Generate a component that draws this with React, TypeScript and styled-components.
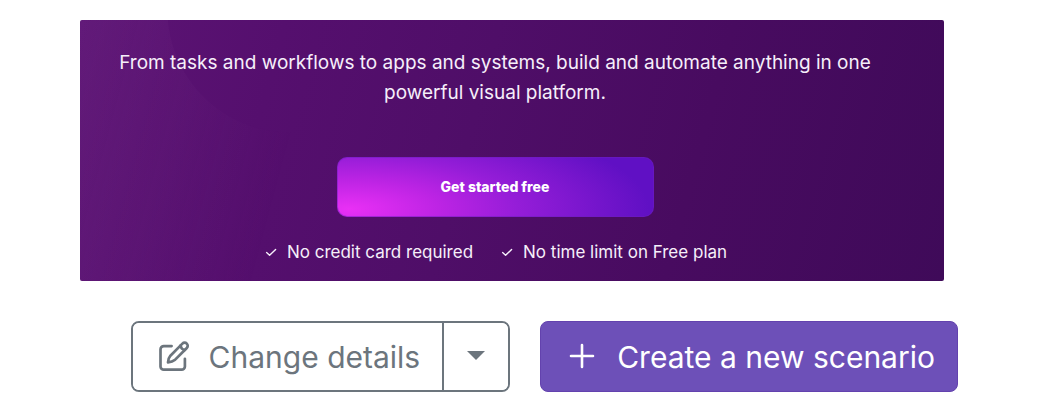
import React from "react";
import styled, { createGlobalStyle } from "styled-components";

const GlobalStyle = createGlobalStyle`
  *, *::before, *::after { box-sizing: border-box; }
  body {
    margin: 0;
    background: #fff;
    font-family: Inter, "Liberation Sans", sans-serif;
  }
`;

const Page = styled.main`
  padding: 20px 88px 28px 80px;
`;

const Banner = styled.section`
  position: relative;
  margin-right: 14px;
  padding: 28px 62px 16px 28px;
  border-radius: 2px;
  overflow: hidden;
  color: #f6effa;
  text-align: center;
  background: linear-gradient(105deg, #5c1474 0%, #550f6e 22%, #4f0e68 45%, #480b60 70%, #3f0a59 100%);

  &::before {
    content: "";
    position: absolute;
    inset: 0;
    background: linear-gradient(105deg, rgba(120, 50, 140, 0.22), rgba(120, 50, 140, 0.1) 14%, rgba(120, 50, 140, 0) 26%);
    mask-image: radial-gradient(circle at 210px -10px, transparent 122px, #000 123px);
  }
`;

const BannerContent = styled.div`
  position: relative;
  display: flex;
  flex-direction: column;
  align-items: center;
`;

const Lead = styled.p`
  margin: 0;
  font-size: 19px;
  line-height: 30px;
`;

const Cta = styled.button`
  width: 317px;
  max-width: 100%;
  height: 60px;
  margin: 49px 0 23px;
  border: 1px solid rgba(110, 30, 190, 0.5);
  border-radius: 10px;
  color: #fff;
  font: 800 14px/20px Inter, "Liberation Sans", sans-serif;
  background: radial-gradient(300px 95px at 12px 52px, #e930f5 0%, #bd24e4 30%, #951dd8 56%, #6010c4 100%) border-box;
`;

const Perks = styled.ul`
  display: flex;
  gap: 28px;
  margin: 0;
  padding: 0 0 1px 2px;
  list-style: none;
`;

const Perk = styled.li`
  display: flex;
  align-items: center;
  gap: 10px;
  font-size: 17px;
  line-height: 24px;
`;

const Actions = styled.div`
  display: flex;
  justify-content: flex-end;
  gap: 30px;
  margin-top: 40px;
`;

const SplitButton = styled.div`
  display: flex;
  height: 71px;
  border: 2px solid #6c757d;
  border-radius: 8px;
  overflow: hidden;
`;

const ActionButton = styled.button<{ $primary?: boolean }>`
  display: flex;
  align-items: center;
  gap: ${(p) => (p.$primary ? 21 : 19)}px;
  height: ${(p) => (p.$primary ? "71px" : "auto")};
  padding: ${(p) => (p.$primary ? "0 22px 0 27px" : "0 22px 0 25px")};
  border: ${(p) => (p.$primary ? "1px solid #6342ae" : "0")};
  border-radius: ${(p) => (p.$primary ? 8 : 0)}px;
  background: ${(p) => (p.$primary ? "#6d50b8" : "#fff")};
  color: ${(p) => (p.$primary ? "#fff" : "#6c757d")};
  font: 400 30px/40px Inter, "Liberation Sans", sans-serif;
  white-space: nowrap;
`;

const Toggle = styled.button`
  display: flex;
  align-items: center;
  justify-content: center;
  width: 66px;
  padding: 0;
  border: 0;
  border-left: 2px solid #6c757d;
  background: #fff;
  color: #6c757d;
`;

const Check = () => (
  <svg width="12" height="12" viewBox="0 0 12 12" fill="none" stroke="currentColor" strokeWidth="1.4" strokeLinecap="round" strokeLinejoin="round" aria-hidden="true">
    <path d="M1.6 6.6 4.6 9.3 10.6 3.4" />
  </svg>
);

const EditIcon = () => (
  <svg width="32" height="32" viewBox="0 0 32 32" fill="none" stroke="currentColor" strokeWidth="2.7" strokeLinecap="round" strokeLinejoin="round" aria-hidden="true">
    <path d="M13.6 5.1H5.8A3.3 3.3 0 0 0 2.5 8.4v17a3.3 3.3 0 0 0 3.3 3.3h17.8a3.3 3.3 0 0 0 3.3-3.3v-7.6" />
    <path d="M10 21.4c.2-2.6.7-4.8 2.4-6.7L24.4 2.6a3.1 3.1 0 0 1 4.4 4.4L16.7 19.1c-1.9 1.7-4.1 2.1-6.7 2.3z" />
    <path d="M22.5 4.6c.4 2.4 1.9 3.9 4.4 4.4" />
  </svg>
);

const PlusIcon = () => (
  <svg width="28" height="28" viewBox="0 0 28 28" fill="none" stroke="currentColor" strokeWidth="2.6" strokeLinecap="round" aria-hidden="true">
    <path d="M14 2v22M3 13h22" />
  </svg>
);

const Caret = () => (
  <svg width="18" height="12" viewBox="0 0 18 12" fill="currentColor" aria-hidden="true">
    <path d="M0 0h18L9 9z" />
  </svg>
);

export default function App() {
  return (
    <>
      <GlobalStyle />
      <Page>
        <Banner>
          <BannerContent>
            <Lead>
              From tasks and workflows to apps and systems, build and automate anything in one powerful visual platform.
            </Lead>
            <Cta type="button">Get started free</Cta>
            <Perks>
              <Perk><Check />No credit card required</Perk>
              <Perk><Check />No time limit on Free plan</Perk>
            </Perks>
          </BannerContent>
        </Banner>
        <Actions>
          <SplitButton>
            <ActionButton type="button"><EditIcon />Change details</ActionButton>
            <Toggle type="button" aria-label="More options"><Caret /></Toggle>
          </SplitButton>
          <ActionButton type="button" $primary><PlusIcon />Create a new scenario</ActionButton>
        </Actions>
      </Page>
    </>
  );
}
